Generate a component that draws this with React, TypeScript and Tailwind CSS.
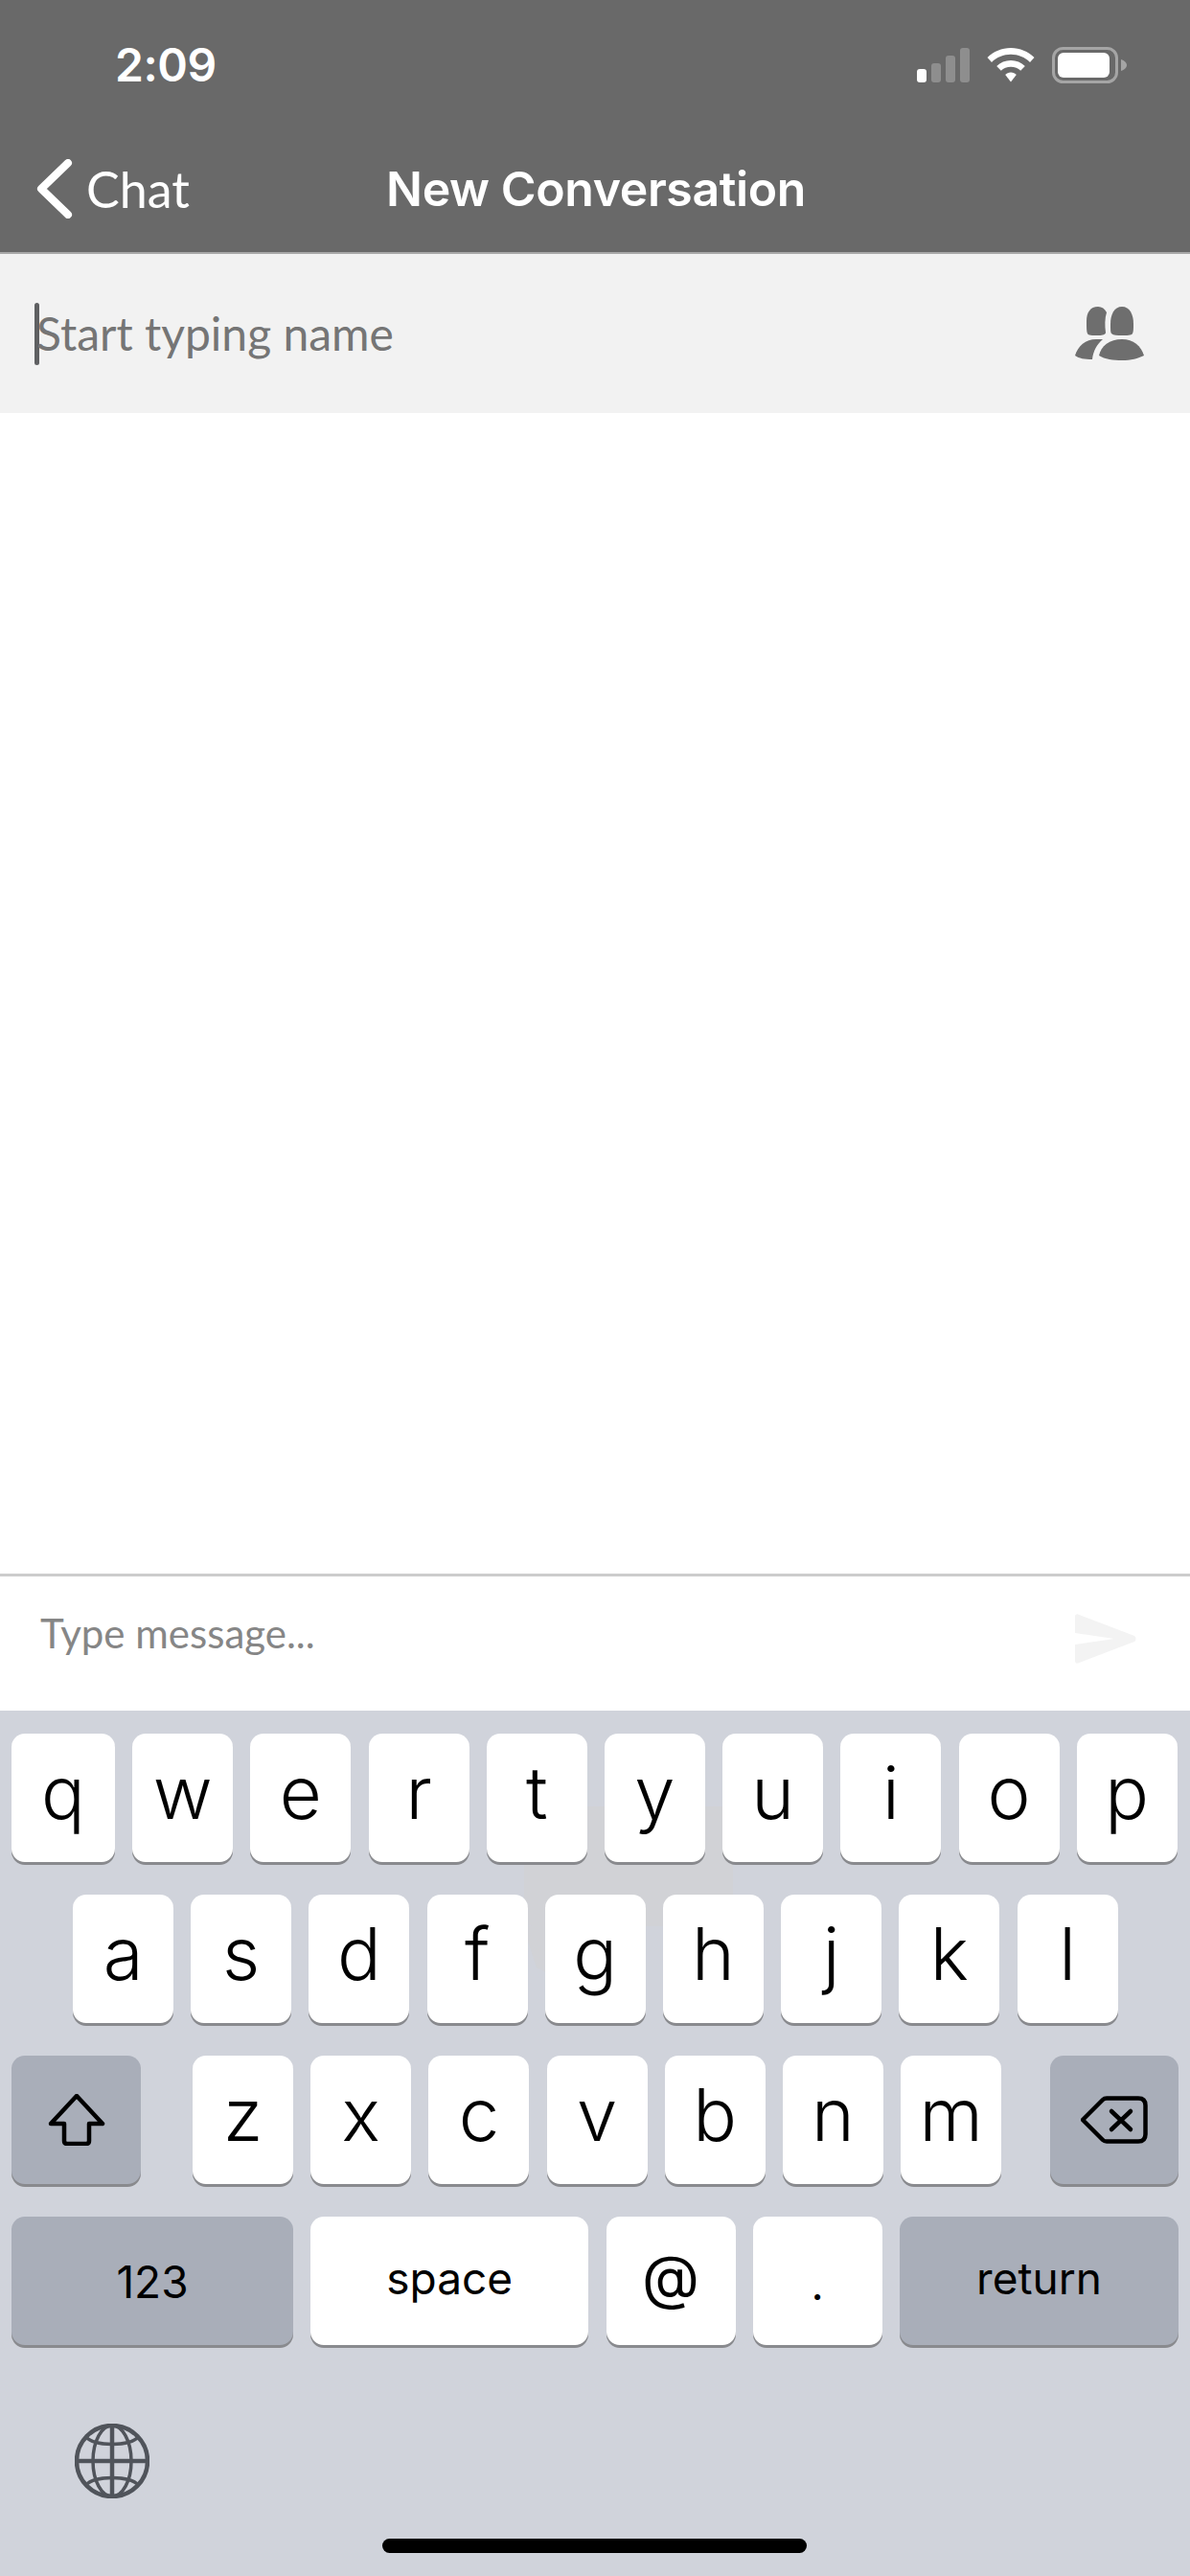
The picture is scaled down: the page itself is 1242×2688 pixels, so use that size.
const rowOne = ["w", "e", "r", "t", "y", "u", "i", "o", "p"];
const rowTwo = ["a", "s", "d", "f", "g", "h", "j", "k", "l"];
const rowThree = ["z", "x", "c", "v", "b", "n", "m"];

const keyBase =
  "flex h-[134px] items-center justify-center rounded-[14px] text-black shadow-[0_3px_0_#898a8e] font-['Inter',sans-serif] font-light";

const LetterKey = ({ label, wide }: { label: string; wide?: boolean }) => (
  <div className={`${keyBase} ${wide ? "w-[108px]" : "w-[105px]"} shrink-0 bg-white pb-[12px] text-[76px] leading-none`}>{label}</div>
);

const StatusIcons = () => (
  <div className="flex items-center gap-[18px]">
    <svg width="55" height="36" viewBox="0 0 55 36">
      <rect x="0" y="22" width="10" height="14" rx="3" fill="#fff" />
      <rect x="15" y="16" width="10" height="20" rx="3" fill="#fff" fillOpacity="0.25" />
      <rect x="30" y="8" width="10" height="28" rx="3" fill="#fff" fillOpacity="0.25" />
      <rect x="45" y="0" width="10" height="36" rx="3" fill="#fff" fillOpacity="0.25" />
    </svg>
    <svg width="50" height="36" viewBox="0 0 50 36">
      <path d="M25 0C15.500 0 7 3.700 0.500 10L5 15C10.200 9.800 17.300 6.800 25 6.800S39.800 9.800 45 15L49.500 10C43 3.700 34.500 0 25 0Z" fill="#fff" />
      <path d="M25 13C19.300 13 14.100 15.200 10.200 19L14.800 23.800C17.400 21.200 21 19.700 25 19.700S32.600 21.200 35.200 23.800L39.800 19C35.900 15.200 30.700 13 25 13Z" fill="#fff" />
      <path d="M25 25.500C22.700 25.500 20.600 26.400 19.200 27.900L25 35.500L30.800 27.900C29.400 26.400 27.300 25.500 25 25.500Z" fill="#fff" />
    </svg>
    <svg width="79" height="38" viewBox="0 0 79 38">
      <rect x="1.500" y="1.500" width="66" height="35" rx="10" fill="none" stroke="#fff" strokeOpacity="0.4" strokeWidth="3" />
      <rect x="6" y="6" width="54" height="26" rx="6" fill="#fff" />
      <path d="M72 13C75.500 14 78 16.500 78 19S75.500 24 72 25Z" fill="#fff" fillOpacity="0.4" />
    </svg>
  </div>
);

const PeopleIcon = () => (
  <svg width="72" height="56" viewBox="0 0 72 56" fill="#6e6e6e">
    <path d="M24 0C16 0 12 6 12 15C12 21 12 26 13 28C14 30 17 30 25 30C29 30 32 29 32 27C31 20 31 12 33 6C31 2 28 0 24 0Z" />
    <path d="M49 0C41 0 37 8 37 18C37 24 37 27 38 28C40 30 44 30 49 30C54 30 59 30 60 28C61 26 61 23 61 18C61 8 57 0 49 0Z" />
    <path d="M0 51C3 41 11 34 22 34H29C23 39 19 46 18 55C10 55 4 54 0 51Z" />
    <path d="M25 51C27 41 36 34 49 34C61 34 69 41 72 51C66 54 58 56 49 56C40 56 31 55 25 51Z" />
  </svg>
);

const GhostShape = () => (
  <svg className="absolute left-[400px] top-[100px]" width="400" height="180" viewBox="0 0 400 180" fill="#d2d2d4" fillOpacity="0.7">
    <path d="M147 0H365V115C365 120 360 125 355 125H274V168L250 178L215 150L180 178L160 168L146 125H155C150 125 147 120 147 115Z" />
  </svg>
);

export default function App() {
  return (
    <div className="flex h-[2688px] w-[1242px] flex-col overflow-hidden bg-white font-['Lato',sans-serif]">
      {/* nav bar */}
      <header className="h-[265px] shrink-0 border-b-[2px] border-[#a8a8a8] bg-[#696969] text-white">
        <div className="flex h-[136px] items-center justify-between pl-[120px] pr-[65px]">
          <span className="font-['Inter',sans-serif] text-[48px] font-semibold leading-none tracking-[-0.5px]">2:09</span>
          <StatusIcons />
        </div>
        <div className="mt-[16px] grid h-[90px] grid-cols-[1fr_auto_1fr] items-center pl-[38px]">
          <div className="flex items-center gap-[14px]">
            <svg width="38" height="62" viewBox="0 0 38 62" fill="none">
              <path d="M33 4L5 31L33 58" stroke="#fff" strokeWidth="8" strokeLinecap="round" strokeLinejoin="round" />
            </svg>
            <span className="text-[52px] leading-none">Chat</span>
          </div>
          <h1 className="mr-[36px] font-['Inter',sans-serif] text-[50px] font-semibold leading-none tracking-[-0.4px]">New Conversation</h1>
          <div />
        </div>
      </header>

      {/* recipient search */}
      <div className="flex h-[166px] shrink-0 items-center justify-between bg-[#f2f2f2] pl-[36px] pr-[48px]">
        <div className="flex items-center">
          <div className="h-[65px] w-[5px] rounded-full bg-[#5f6062]" />
          <span className="-ml-[3px] text-[48px] leading-none text-[#757575]">Start typing name</span>
        </div>
        <PeopleIcon />
      </div>

      <div className="flex-1" />

      {/* composer */}
      <div className="flex h-[143px] shrink-0 items-center justify-between border-t-[3px] border-[#cccccc] pb-[22px] pl-[42px] pr-[56px]">
        <span className="text-[42px] leading-none text-[#868686]">Type message...</span>
        <svg className="mt-[12px]" width="64" height="52" viewBox="0 0 64 52" fill="#f3f3f3">
          <path d="M3 0.500L62 23C64 24.500 64 27.500 62 29L3 51.500C1.500 52 0 51 0 49V32L41 26L0 20V3C0 1 1.500 0 3 0.500Z" />
        </svg>
      </div>

      {/* keyboard */}
      <div className="relative flex h-[903px] shrink-0 flex-col gap-[34px] bg-[#d0d3db] px-[12px] pt-[24px]">
        <GhostShape />
        <div className="relative flex gap-[18.2px]">
          <LetterKey label="q" wide />
          {rowOne.map((k) => (
            <LetterKey key={k} label={k} />
          ))}
        </div>
        <div className="relative flex gap-[18.2px] pl-[64px]">
          {rowTwo.map((k) => (
            <LetterKey key={k} label={k} />
          ))}
        </div>
        <div className="relative flex justify-between">
          <div className={`${keyBase} w-[135px] bg-[#a9aeb9]`}>
            <svg width="60" height="54" viewBox="0 0 60 54" fill="none">
              <path d="M30 2L57 31H43V49C43 51 42 52 40 52H20C18 52 17 51 17 49V31H3Z" stroke="#000" strokeWidth="4.500" strokeLinejoin="round" />
            </svg>
          </div>
          <div className="ml-[54px] mr-auto flex gap-[18.2px]">
            {rowThree.map((k) => (
              <LetterKey key={k} label={k} />
            ))}
          </div>
          <div className={`${keyBase} w-[134px] bg-[#a9aeb9]`}>
            <svg width="70" height="50" viewBox="0 0 70 50" fill="none" stroke="#000" strokeWidth="4.500" strokeLinecap="round" strokeLinejoin="round">
              <path d="M2 25L23 4C24 3 25 2.500 27 2.500H60C65 2.500 67.500 5 67.500 10V40C67.500 45 65 47.500 60 47.500H27C25 47.500 24 47 23 46Z" />
              <path d="M32 16L52 35M52 16L32 35" />
            </svg>
          </div>
        </div>
        <div className="relative flex justify-between">
          <div className={`${keyBase} w-[294px] bg-[#a9aeb9] pt-[2px] text-[46px] leading-none font-normal`}>123</div>
          <div className={`${keyBase} w-[290px] bg-white pb-[6px] text-[46px] leading-none font-normal`}>space</div>
          <div className={`${keyBase} w-[135px] bg-white pb-[8px] text-[62px] leading-none font-normal`}>@</div>
          <div className={`${keyBase} w-[135px] bg-white pt-[6px] text-[46px] leading-none font-normal`}>.</div>
          <div className={`${keyBase} w-[291px] bg-[#a9aeb9] pb-[6px] text-[46px] leading-none font-normal`}>return</div>
        </div>

        <div className="relative mt-[48px] pl-[66px]">
          <svg width="78" height="78" viewBox="0 0 78 78" fill="none" stroke="#50545b" strokeWidth="3.500">
            <circle cx="39" cy="39" r="37" strokeWidth="4.500" />
            <ellipse cx="39" cy="39" rx="20" ry="37" />
            <path d="M39 2V76M2 39H76" strokeWidth="4.500" />
            <path d="M12 14C20 24 58 24 66 14M12 64C20 54 58 54 66 64" />
          </svg>
        </div>

        <div className="absolute left-[399px] top-[864px] h-[15px] w-[443px] rounded-full bg-black" />
      </div>
    </div>
  );
}
